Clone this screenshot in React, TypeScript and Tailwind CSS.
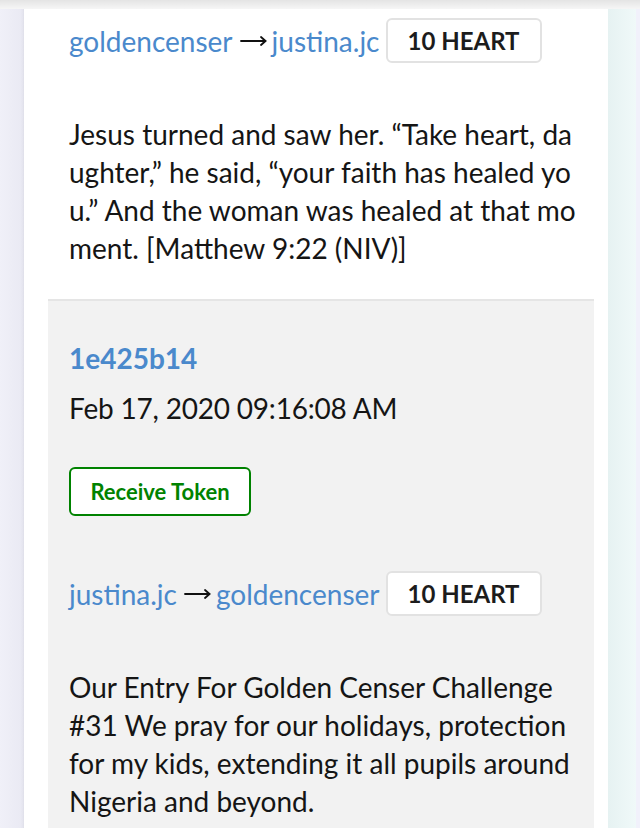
import React from "react";

function Arrow() {
  return (
    <svg width="27" height="10" viewBox="0 0 27 10" className="ml-[7px] mr-[5px] shrink-0" fill="none" stroke="#111" strokeWidth="1.8" strokeLinecap="round" strokeLinejoin="round">
      <line x1="1" y1="5" x2="25.5" y2="5" />
      <polyline points="21,1 25.5,5 21,9" />
    </svg>
  );
}

function Header({ from, to }: { from: string; to: string }) {
  return (
    <div className="flex items-center h-[45px]">
      <span className="text-[#4a89cc]">{from}</span>
      <Arrow />
      <span className="text-[#4a89cc]">{to}</span>
      <span className="ml-[6px] flex h-[45px] items-center rounded-md border-2 border-[#e2e2e2] bg-white px-[20px] text-[24px] font-bold text-[#1c1c1c]">
        10 HEART
      </span>
    </div>
  );
}

export default function App() {
  return (
    <div
      className="relative flex w-[640px] min-h-[828px] overflow-hidden bg-[#eef0f8] text-[28px] leading-[38px] text-[#151515]"
      style={{ fontFamily: "Lato, 'Open Sans', sans-serif" }}
    >
      <div className="pointer-events-none absolute left-0 right-0 top-0 h-[9px] bg-gradient-to-b from-[#e4e4e4] to-[#f6f6f6]" />
      <div className="w-[24px] shrink-0 bg-gradient-to-r from-[#f0f0f8] to-[#e9e9f3]" />
      <div className="w-[584px] shrink-0 bg-white pl-[24px] pr-[14px] shadow-[0_0_4px_rgba(0,0,0,0.08)]">
        <div className="pl-[21px] pr-[16px] pt-[18px] pb-[32px]">
          <Header from="goldencenser" to="justina.jc" />
          <p className="mt-[52px] break-all">
            Jesus turned and saw her. “Take heart, daughter,” he said, “your faith has healed you.” And the woman was healed at that moment. [Matthew 9:22 (NIV)]
          </p>
        </div>
        <div className="border-t-2 border-[#e5e5e5] bg-[#f2f2f2] pl-[21px] pr-[16px] pt-[38px] pb-[40px]">
          <div className="font-bold text-[#4a89cc]">1e425b14</div>
          <div className="mt-[12px] tracking-[-0.2px]">Feb 17, 2020 09:16:08 AM</div>
          <button className="mt-[40px] flex h-[49px] w-[182px] items-center justify-center rounded-md border-2 border-[#008200] bg-white text-[22px] font-bold text-[#008200]">
            Receive Token
          </button>
          <div className="mt-[55px]">
            <Header from="justina.jc" to="goldencenser" />
          </div>
          <p className="mt-[52px] break-words">
            Our Entry For Golden Censer Challenge #31 We pray for our holidays, protection for my kids, extending it all pupils around Nigeria and beyond.
          </p>
        </div>
      </div>
      <div className="w-[28px] shrink-0 bg-gradient-to-r from-[#e6f2f2] to-[#f0f9f9]" />
      <div className="w-[4px] shrink-0 bg-[#f1f1fb]" />
    </div>
  );
}
